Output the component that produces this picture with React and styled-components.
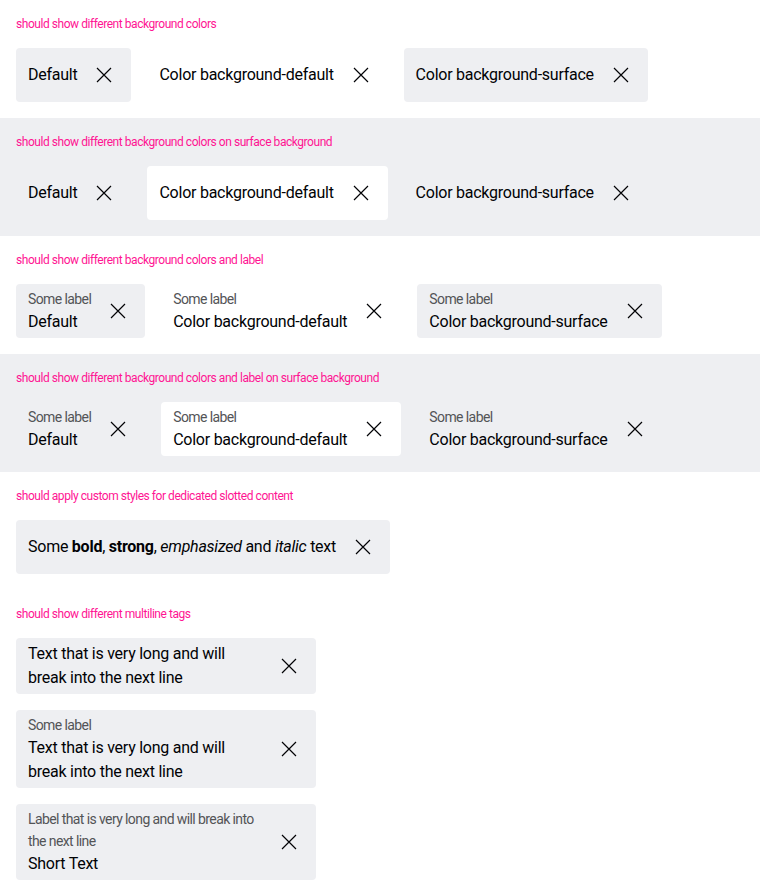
import React from 'react'
import styled, { createGlobalStyle } from 'styled-components'

const GlobalStyle = createGlobalStyle`
  body {
    margin: 0;
    font-family: Roboto, 'Liberation Sans', sans-serif;
    background: #fff;
  }
`

const Section = styled.section`
  padding: 16px;
  background: ${props => (props.$surface ? '#eeeff2' : '#ffffff')};
`

const Title = styled.p`
  margin: 0 0 16px;
  font-size: 12px;
  line-height: 16px;
  letter-spacing: -0.45px;
  color: #ff1493;
`

const Row = styled.div`
  display: flex;
  flex-wrap: wrap;
  gap: 16px;
  align-items: flex-start;
`

const Column = styled.div`
  display: flex;
  flex-direction: column;
  align-items: flex-start;
  gap: 16px;
`

const TagButton = styled.button`
  display: flex;
  align-items: center;
  gap: 4px;
  padding: 4px 4px 4px 12px;
  border: 0;
  border-radius: 4px;
  background: ${props => props.$bg};
  font-family: inherit;
  color: #010205;
  text-align: left;
  cursor: pointer;
  max-width: ${props => (props.$narrow ? '300px' : 'none')};
`

const Content = styled.span`
  display: flex;
  flex-direction: column;
  flex: 1 1 auto;
  min-width: 0;
`

const Label = styled.span`
  font-size: 14px;
  line-height: 22px;
  letter-spacing: -0.6px;
  color: #535457;
`

const Text = styled.span`
  font-size: 16px;
  line-height: 24px;
  letter-spacing: -0.25px;
  color: #010205;

  b, strong {
    font-weight: 700;
  }
  em, i {
    font-style: italic;
  }
`

const IconBox = styled.span`
  flex: 0 0 46px;
  width: 46px;
  height: 46px;
  display: flex;
  align-items: center;
  justify-content: center;
`

const CloseIcon = () => (
  <IconBox>
    <svg width="24" height="24" viewBox="0 0 24 24" fill="none">
      <path d="M5 5l14 14M19 5L5 19" stroke="#010205" strokeWidth="1.2" />
    </svg>
  </IconBox>
)

const Tag = ({ bg = '#eeeff2', label, narrow, children }) => (
  <TagButton $bg={bg} $narrow={narrow} type="button">
    <Content>
      {label && <Label>{label}</Label>}
      <Text>{children}</Text>
    </Content>
    <CloseIcon />
  </TagButton>
)

const BG_SURFACE = '#eeeff2'
const BG_DEFAULT = '#ffffff'

const ColorRow = ({ surface, withLabel }) => {
  const label = withLabel ? 'Some label' : undefined
  return (
    <Row>
      <Tag bg={surface ? 'transparent' : BG_SURFACE} label={label}>Default</Tag>
      <Tag bg={surface ? BG_DEFAULT : 'transparent'} label={label}>Color background-default</Tag>
      <Tag bg={surface ? 'transparent' : BG_SURFACE} label={label}>Color background-surface</Tag>
    </Row>
  )
}

export default function App() {
  return (
    <>
      <GlobalStyle />
      <Section>
        <Title>should show different background colors</Title>
        <ColorRow />
      </Section>
      <Section $surface>
        <Title>should show different background colors on surface background</Title>
        <ColorRow surface />
      </Section>
      <Section>
        <Title>should show different background colors and label</Title>
        <ColorRow withLabel />
      </Section>
      <Section $surface>
        <Title>should show different background colors and label on surface background</Title>
        <ColorRow surface withLabel />
      </Section>
      <Section>
        <Title>should apply custom styles for dedicated slotted content</Title>
        <Row>
          <Tag>
            Some <b>bold</b>, <strong>strong</strong>, <em>emphasized</em> and <i>italic</i> text
          </Tag>
        </Row>
      </Section>
      <Section>
        <Title>should show different multiline tags</Title>
        <Column>
          <Tag narrow>Text that is very long and will break into the next line</Tag>
          <Tag narrow label="Some label">Text that is very long and will break into the next line</Tag>
          <Tag narrow label="Label that is very long and will break into the next line">Short Text</Tag>
        </Column>
      </Section>
    </>
  )
}
